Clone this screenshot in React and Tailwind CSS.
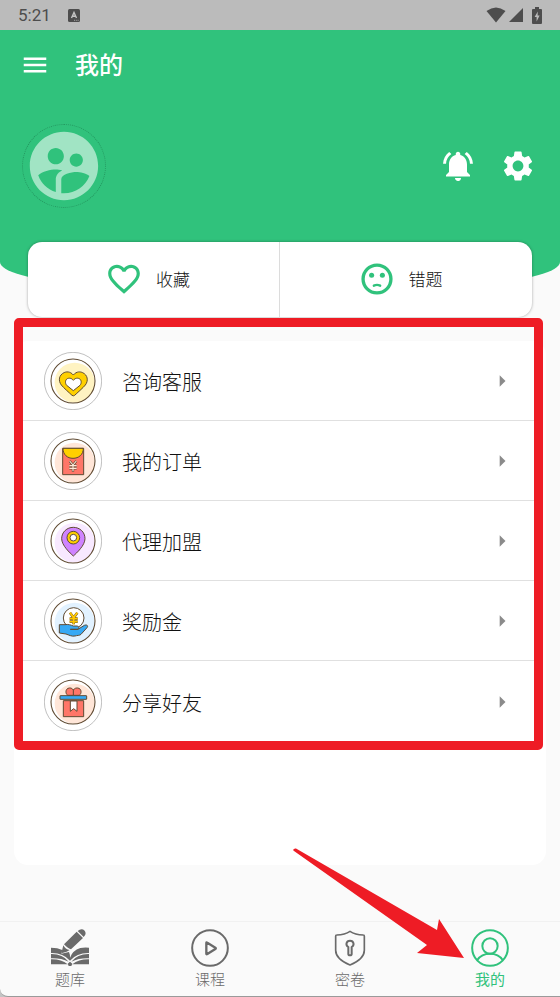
import React from "react";
import {
  MdArrowRight,
  MdFavoriteBorder,
  MdMenu,
  MdNotificationsActive,
  MdSettings,
  MdSupervisedUserCircle,
} from "react-icons/md";

const OUTLINE = "#5f4a32";

function RoundIcon({ tint, children }) {
  return (
    <svg viewBox="0 0 174 174" className="size-[58px] shrink-0" fill="none">
      <circle cx="87" cy="87" r="86" stroke="#8a8a8a" strokeWidth="1.6" />
      <circle cx="92" cy="92" r="60" fill={tint} />
      <circle cx="87" cy="87" r="66" stroke={OUTLINE} strokeWidth="3.2" />
      <g stroke={OUTLINE} strokeWidth="3" strokeLinejoin="round">
        {children}
      </g>
    </svg>
  );
}

function ServiceIcon() {
  return (
    <RoundIcon tint="#fff3c2">
      <path
        fill="#ffd000"
        d="M88 69C78 57 66 59 60 62C45 69 42 86 52 99C58 107 78 124 84 130Q88 133 92 130C98 124 118 107 124 99C134 86 131 69 116 62C110 59 98 57 88 69Z"
      />
      <path
        fill="#fff"
        d="M88 85C82 77 74 78 70 80C63 84 63 94 68 100L88 116L108 100C113 94 113 84 106 80C102 78 94 77 88 85Z"
      />
    </RoundIcon>
  );
}

function OrderIcon() {
  return (
    <RoundIcon tint="#ffe6d8">
      <path fill="#ff7668" d="M56 49H119V128H56Z" />
      <path fill="#ffd000" d="M57 49H118C118 68 104 79 87 79C70 79 57 68 57 49Z" />
      <path d="M77 87L87 99L97 87M87 99V119M76 101H98M76 109H98" strokeWidth="7" />
      <path
        d="M77 87L87 99L97 87M87 99V118M76 101H98M76 109H98"
        stroke="#ffe9d8"
        strokeWidth="3.5"
      />
    </RoundIcon>
  );
}

function AgentIcon() {
  return (
    <RoundIcon tint="#f8e9ff">
      <path
        fill="#cf83ff"
        d="M88 132C78 123 53 100 53 80C53 60 69 46 88 46C107 46 123 60 123 80C123 100 98 123 88 132Z"
      />
      <circle cx="88" cy="77" r="19" fill="#ffd000" />
      <circle cx="88" cy="77" r="10" fill="#fff" />
    </RoundIcon>
  );
}

function RewardIcon() {
  return (
    <RoundIcon tint="#e2f2ff">
      <circle cx="89" cy="78" r="31" fill="#fff" />
      <path d="M78 62L89 77L100 62M89 77V97M77 80H101M77 89H101" strokeWidth="8" />
      <path
        d="M78 62L89 77L100 62M89 77V97M77 80H101M77 89H101"
        stroke="#ffc800"
        strokeWidth="5.5"
      />
      <path
        fill="#36a9f5"
        d="M46 98H63C73 96 80 99 88 102H99C107 103 106 112 98 112H79H102L121 100C128 97 134 101 129 107L111 127C107 131 99 130 93 132C83 134 75 129 66 126L46 123Z"
      />
    </RoundIcon>
  );
}

function ShareIcon() {
  return (
    <RoundIcon tint="#ffe6d8">
      <path fill="#ff7668" d="M58 83H119V131H58Z" />
      <path
        fill="#ff7668"
        d="M88 67H71C64 62 64 50 72 46C79 43 85 46 88 51C91 46 98 43 105 46C113 50 113 62 106 67ZM88 51V67"
      />
      <rect x="48" y="68" width="80" height="11" rx="1" fill="#36a9f5" />
      <path fill="#fff" d="M79 84H99V115L89 107L79 115Z" />
    </RoundIcon>
  );
}

function SadFaceIcon({ className }) {
  return (
    <svg viewBox="0 0 24 24" className={className} fill="none" stroke="currentColor">
      <circle cx="12" cy="12" r="8.8" strokeWidth="2.1" />
      <circle cx="8.6" cy="9.6" r="1.6" fill="currentColor" stroke="none" />
      <circle cx="15.4" cy="9.6" r="1.6" fill="currentColor" stroke="none" />
      <path d="M10 16.2Q12 15.2 14 16.2" strokeWidth="1.5" strokeLinecap="round" />
    </svg>
  );
}

function BookIcon() {
  return (
    <svg viewBox="0 0 114 114" className="size-[38px]" fill="currentColor">
      <path d="M80 6L86 2Q94 -2 101 5Q106 12 102 19L98 24ZM77 8L96 27L60 61Q52 60 39 46ZM37 49Q43 61 56 63L47 68L31 73Z" />
      <path d="M0 56Q20 56 34 63L31 74L54 69Q58 78 57 86Q64 65 88 57Q101 54 114 56V72Q78 71 57 95Q36 71 0 72Z" />
      <path d="M0 75Q34 74 53 98Q30 87 0 88ZM114 75Q80 74 61 98Q84 87 114 88Z" />
      <path d="M0 91Q30 90 50 106H0ZM114 91Q84 90 64 106H114Z" />
      <path d="M50 104L57 98L64 104L61 111H53Z" />
    </svg>
  );
}

function PlayIcon() {
  return (
    <svg
      viewBox="0 0 114 114"
      className="size-[38px]"
      fill="none"
      stroke="currentColor"
      strokeLinejoin="round"
    >
      <circle cx="57" cy="57" r="53.5" strokeWidth="6" />
      <path d="M46 42Q46 39 49 41L73 56Q76 58 73 60L49 75Q46 77 46 74Z" strokeWidth="7" />
    </svg>
  );
}

function ShieldIcon() {
  return (
    <svg
      viewBox="0 0 114 114"
      className="size-[38px]"
      fill="none"
      stroke="currentColor"
      strokeLinejoin="round"
    >
      <path
        d="M57 7Q72 17 97 18Q100 18 100 22V64C100 86 77 100 57 108C37 100 14 86 14 64V22Q14 18 17 18Q42 17 57 7Z"
        strokeWidth="5"
      />
      <path
        d="M52 54C43 49 45 35 57 35C69 35 71 49 62 54V75Q62 79 57 79Q52 79 52 75Z"
        strokeWidth="6"
      />
    </svg>
  );
}

function PersonIcon() {
  return (
    <svg
      viewBox="0 0 114 114"
      className="size-[38px]"
      fill="none"
      stroke="currentColor"
    >
      <circle cx="57" cy="57" r="53.5" strokeWidth="6" />
      <circle cx="57" cy="51" r="23" strokeWidth="6" />
      <path d="M19 93C28 79 41 74 57 74C73 74 86 79 95 93" strokeWidth="6" />
    </svg>
  );
}

const MENU_ITEMS = [
  { label: "咨询客服", Icon: ServiceIcon },
  { label: "我的订单", Icon: OrderIcon },
  { label: "代理加盟", Icon: AgentIcon },
  { label: "奖励金", Icon: RewardIcon },
  { label: "分享好友", Icon: ShareIcon },
];

const TABS = [
  { label: "题库", Icon: BookIcon },
  { label: "课程", Icon: PlayIcon },
  { label: "密卷", Icon: ShieldIcon },
  { label: "我的", Icon: PersonIcon, active: true },
];

function StatusBar() {
  return (
    <div className="flex h-[30px] items-center justify-between bg-[#bbbbbb] px-[18px] text-[#4d4d4d]">
      <div className="flex items-center gap-[17px]">
        <span className="font-[Roboto,sans-serif] text-[17px] leading-5 font-normal">5:21</span>
        <svg viewBox="0 0 12 13" className="h-[13px] w-3">
          <rect width="12" height="13" rx="1.5" fill="currentColor" />
          <path
            d="M3.5 9L6 3.5L8.5 9M4.4 7.3H7.6"
            fill="none"
            stroke="#c4c4c4"
            strokeWidth="1.4"
          />
          <path d="M6 11.3H11" stroke="#bbbbbb" strokeWidth="0.8" strokeDasharray="1 0.8" />
        </svg>
      </div>
      <div className="flex items-center">
        <svg viewBox="0 0 20 16" className="h-4 w-5" fill="currentColor">
          <path d="M0.5 4Q10 -3 19.5 4L10 15.5Z" />
        </svg>
        <svg viewBox="0 0 14 14" className="ml-[3px] h-3.5 w-3.5" fill="currentColor">
          <path d="M14 0V14H0Z" />
        </svg>
        <svg viewBox="0 0 10 17" className="ml-[9px] h-[17px] w-2.5" fill="currentColor">
          <path d="M3 0H7V2H9Q10 2 10 3V16Q10 17 9 17H1Q0 17 0 16V3Q0 2 1 2H3Z" />
          <path d="M5.8 4.5L2.6 10H4.6V14.5L7.6 8.5H5.6Z" fill="#bbbbbb" />
        </svg>
      </div>
    </div>
  );
}

export default function App() {
  return (
    <div className="flex min-h-screen flex-col bg-[#fafafa] font-['Noto_Sans_CJK_SC',sans-serif] font-light text-[#111111]">
      <StatusBar />

      <header className="rounded-b-[50%_34px] bg-[#30c27c] pb-16 text-white">
        <div className="flex h-[70px] items-center gap-[25px] px-5">
          <button type="button" aria-label="菜单">
            <MdMenu className="size-[30px]" />
          </button>
          <h1 className="pb-0.5 text-2xl font-medium">我的</h1>
        </div>
        <div className="flex h-[132px] items-center justify-between px-[22px]">
          <div className="rounded-full border border-dotted border-[#24965f]">
            <MdSupervisedUserCircle className="size-[82px] text-[#a1e4c4]" />
          </div>
          <div className="flex items-center gap-6 pr-0.5">
            <button type="button" aria-label="通知">
              <MdNotificationsActive className="size-9" />
            </button>
            <button type="button" aria-label="设置">
              <MdSettings className="size-9" />
            </button>
          </div>
        </div>
      </header>

      <main className="pb-14">
        <div className="mx-7 -mt-[54px] grid grid-cols-2 rounded-[14px] bg-white shadow-[0_0_3px_rgba(0,0,0,0.35)]">
          <button
            type="button"
            className="flex h-[75px] items-center justify-center gap-[13px] border-r border-[#dcdcdc] pr-3 pb-0.5 text-[17px]"
          >
            <MdFavoriteBorder className="size-[38px] text-[#30c27c]" />
            收藏
          </button>
          <button
            type="button"
            className="flex h-[75px] items-center justify-center gap-[13px] pr-3 pb-0.5 text-[17px]"
          >
            <SadFaceIcon className="size-[38px] text-[#30c27c]" />
            错题
          </button>
        </div>

        <section className="mx-3.5 mt-6 rounded-[14px] bg-white pb-[124px]">
          <div className="relative">
            <ul className="mr-2 divide-y divide-[#e0e0e0]">
              {MENU_ITEMS.map(({ label, Icon }) => (
                <li key={label} className="h-20">
                  <button
                    type="button"
                    className="flex h-full w-full items-center gap-5 pt-px pr-[22px] pl-[30px] text-left text-xl"
                  >
                    <Icon />
                    <span className="flex-1 pt-0.5">{label}</span>
                    <MdArrowRight className="size-7 text-[#8b8b8b]" />
                  </button>
                </li>
              ))}
            </ul>
            <div className="pointer-events-none absolute -top-[23px] right-[3px] -bottom-[9px] left-0 rounded-[5px] border-[9px] border-[#ee1c25]" />
          </div>
        </section>
      </main>

      <div className="relative mt-auto bg-[#c4c4c4]">
        <nav className="grid h-[76px] grid-cols-4 rounded-bl-lg border-t border-b border-t-[#f1f1f1] border-b-[#9a9a9a] bg-[#fafafa]">
          {TABS.map(({ label, Icon, active }) => (
            <a
              key={label}
              href="#"
              className={
                active
                  ? "flex flex-col items-center pt-[7px] text-[#30c27c]"
                  : "flex flex-col items-center pt-[7px] text-[#6a6a6a]"
              }
            >
              <Icon />
              <span className={active ? "text-[15px] leading-6 font-normal" : "text-[15px] leading-6"}>
                {label}
              </span>
            </a>
          ))}
        </nav>
        <svg
          viewBox="0 0 172 112"
          className="pointer-events-none absolute right-[95px] bottom-[37px] h-28 w-[172px]"
          fill="#ee1c25"
        >
          <path d="M0 2Q1 0 3 0.5L144 82L146 71L171 110L124 105L134 97L1 3Z" />
        </svg>
      </div>
    </div>
  );
}
